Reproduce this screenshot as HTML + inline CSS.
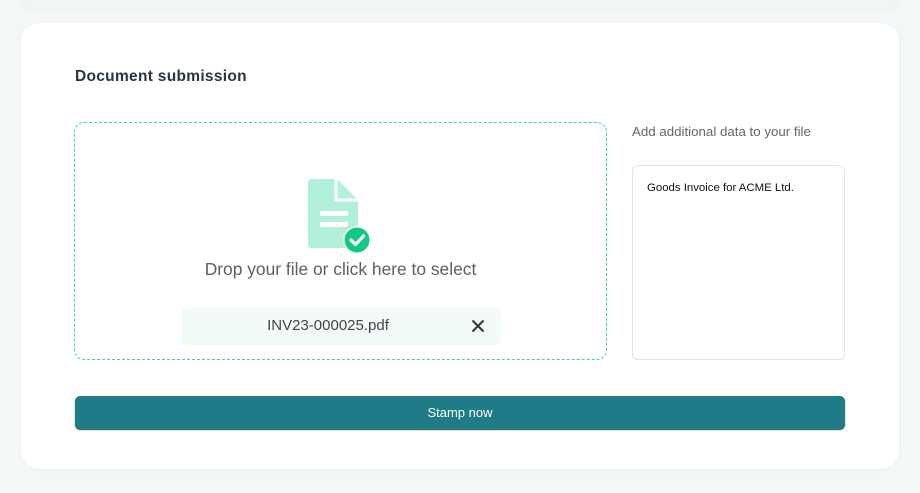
<!DOCTYPE html>
<html><head><style>
body{margin:0;width:920px;height:493px;background:#f4f7f8;font-family:"Liberation Sans",sans-serif;position:relative;overflow:hidden}
.top{position:absolute;left:21px;top:-20px;width:878px;height:28px;background:#f1f5f6;border-radius:16px;box-shadow:0 2px 6px rgba(0,0,0,.03)}
.card{position:absolute;left:21px;top:23px;width:878px;height:446px;background:#fff;border-radius:18px;box-shadow:0 1px 6px rgba(0,0,0,.03)}
.h{position:absolute;left:75px;top:68px;font-size:15.5px;font-weight:bold;color:#2a3540;letter-spacing:.3px}
.drop{position:absolute;left:74px;top:122px;width:531px;height:236px;border:1.5px dashed #3fd49b;border-radius:10px}
.dt{position:absolute;left:0;width:100%;top:136px;text-align:center;font-size:17.4px;color:#5b6066}
.pill{position:absolute;left:106px;top:184px;width:320px;height:38px;background:#f3fbf8;border-radius:7px}
.pill span{position:absolute;width:254px;text-align:center;left:20px;top:10px;font-size:15px;color:#444}
.lab{position:absolute;left:632px;top:124px;font-size:13.3px;color:#666}
.ta{position:absolute;left:632px;top:165px;width:211px;height:193px;border:1px solid #dbe8ea;border-radius:6px}
.ta span{position:absolute;left:14px;top:16px;font-size:11.4px;color:#111}
.btn{position:absolute;left:75px;top:396px;width:770px;height:33px;background:#1e7b87;border-radius:5px;color:#fff;font-size:13px;text-align:center;line-height:33px;box-shadow:0 1px 1px #0d5a63}
</style></head><body>
<div class="top"></div>
<div class="card"></div>
<div class="h">Document submission</div>
<div class="drop">
<svg style="position:absolute;left:232px;top:55px" width="70" height="80" viewBox="0 0 70 80">
<path d="M4 1h26l21 21v45a3 3 0 0 1-3 3H4a3 3 0 0 1-3-3V4a3 3 0 0 1 3-3z" fill="#b3f0d9"/>
<path d="M29 1v21h22" fill="none" stroke="#fff" stroke-width="3"/>
<rect x="13" y="33" width="28" height="5" fill="#fff"/>
<rect x="13" y="44" width="28" height="5" fill="#fff"/>
<circle cx="50" cy="62" r="14" fill="#fff"/>
<circle cx="50" cy="62" r="12.5" fill="#12c983"/>
<path d="M44 62l4.5 4.5L56.5 58" fill="none" stroke="#fff" stroke-width="3.2" stroke-linecap="round" stroke-linejoin="round"/>
</svg>
<div class="dt">Drop your file or click here to select</div>
<div class="pill"><span>INV23-000025.pdf</span>
<svg style="position:absolute;left:290px;top:12px" width="14" height="14" viewBox="0 0 14 14"><path d="M1.5 1.5l11 11M12.5 1.5l-11 11" stroke="#333" stroke-width="2"/></svg></div>
</div>
<div class="lab">Add additional data to your file</div>
<div class="ta"><span>Goods Invoice for ACME Ltd.</span></div>
<div class="btn">Stamp now</div>
</body></html>
